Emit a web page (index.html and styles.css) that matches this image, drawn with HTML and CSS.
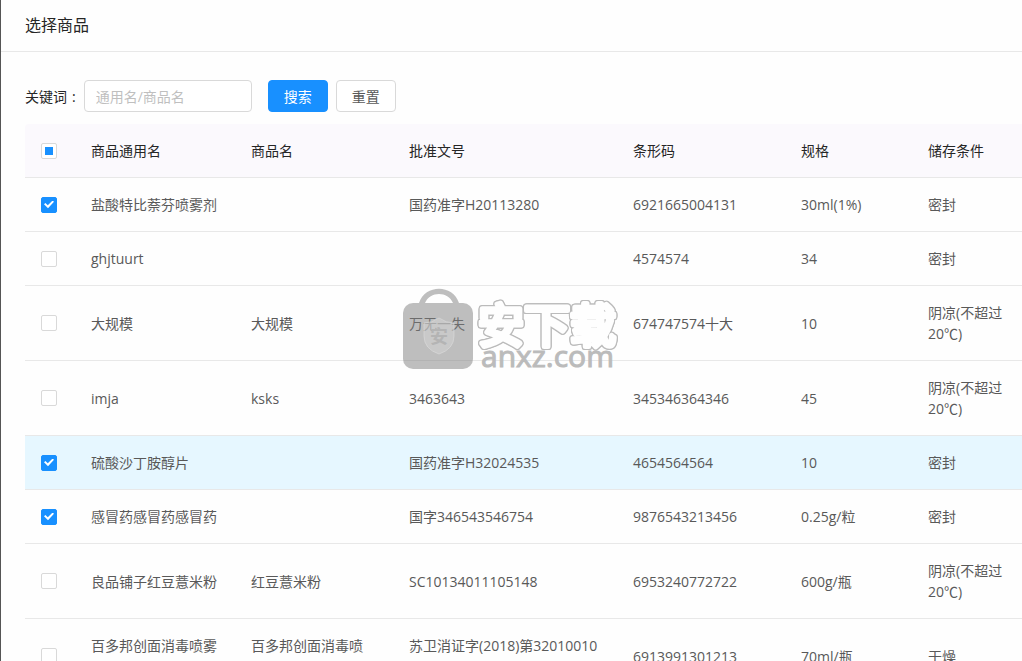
FILE: index.html
```html
<!DOCTYPE html>
<html lang="zh-CN">
<head>
<meta charset="utf-8">
<title>选择商品</title>
<link rel="stylesheet" href="styles.css">
</head>
<body>
<main class="dialog">
  <header class="dialog-header"><h1 class="dialog-title">选择商品</h1></header>
  <section class="dialog-body">
    <form class="search">
      <label class="search-label" for="keyword">关键词<span class="colon">:</span></label>
      <input class="search-input" id="keyword" type="text" placeholder="通用名/商品名">
      <button class="btn btn-primary" type="button">搜索</button>
      <button class="btn" type="reset">重置</button>
    </form>
    <table class="goods">
      <colgroup>
        <col class="col-check"><col class="col-generic"><col class="col-name"><col class="col-approval"><col class="col-barcode"><col class="col-spec"><col>
      </colgroup>
      <thead>
        <tr>
          <th class="check-cell"><input class="check" id="check-all" type="checkbox" aria-label="全选"></th>
          <th>商品通用名</th><th>商品名</th><th>批准文号</th><th>条形码</th><th>规格</th><th>储存条件</th>
        </tr>
      </thead>
      <tbody>
        <tr>
          <td class="check-cell"><input class="check" type="checkbox" aria-label="选择" checked></td>
          <td>盐酸特比萘芬喷雾剂</td><td></td><td>国药准字H20113280</td><td>6921665004131</td><td>30ml(1%)</td><td>密封</td>
        </tr>
        <tr>
          <td class="check-cell"><input class="check" type="checkbox" aria-label="选择"></td>
          <td>ghjtuurt</td><td></td><td></td><td>4574574</td><td>34</td><td>密封</td>
        </tr>
        <tr>
          <td class="check-cell"><input class="check" type="checkbox" aria-label="选择"></td>
          <td>大规模</td><td>大规模</td><td>万无一失</td><td>674747574十大</td><td>10</td><td>阴凉(不超过20℃)</td>
        </tr>
        <tr>
          <td class="check-cell"><input class="check" type="checkbox" aria-label="选择"></td>
          <td>imja</td><td>ksks</td><td>3463643</td><td>345346364346</td><td>45</td><td>阴凉(不超过20℃)</td>
        </tr>
        <tr class="active">
          <td class="check-cell"><input class="check" type="checkbox" aria-label="选择" checked></td>
          <td>硫酸沙丁胺醇片</td><td></td><td>国药准字H32024535</td><td>4654564564</td><td>10</td><td>密封</td>
        </tr>
        <tr>
          <td class="check-cell"><input class="check" type="checkbox" aria-label="选择" checked></td>
          <td>感冒药感冒药感冒药</td><td></td><td>国字346543546754</td><td>9876543213456</td><td>0.25g/粒</td><td>密封</td>
        </tr>
        <tr>
          <td class="check-cell"><input class="check" type="checkbox" aria-label="选择"></td>
          <td>良品铺子红豆薏米粉</td><td>红豆薏米粉</td><td>SC10134011105148</td><td>6953240772722</td><td>600g/瓶</td><td>阴凉(不超过20℃)</td>
        </tr>
        <tr class="tall">
          <td class="check-cell"><input class="check" type="checkbox" aria-label="选择"></td>
          <td class="top">百多邦创面消毒喷雾</td><td class="top">百多邦创面消毒喷</td><td class="top">苏卫消证字(2018)第32010010</td><td>6913991301213</td><td>70ml/瓶</td><td>干燥</td>
        </tr>
      </tbody>
    </table>
  </section>
  <svg class="watermark" viewBox="0 0 220 86" width="220" height="86" aria-hidden="true">
    <g class="mark-bag">
      <path d="M17 15 C23 -4 51 -4 57 15 L51 15 C46 3 28 3 23 15 Z"/>
      <rect x="1" y="15" width="70" height="66" rx="10"/>
    </g>
    <path class="mark-shield" d="M37 30 Q44 35 52 35 V48 Q52 61 37 66 Q22 61 22 48 V35 Q30 35 37 30 Z"/>
    <text class="mark-seal" x="37" y="55" text-anchor="middle">安</text>
    <text class="mark-name" x="76" y="54">安下载</text>
    <text class="mark-site" x="79" y="79">anxz.com</text>
  </svg>
</main>
<script src="script.js"></script>
</body>
</html>
```
FILE: styles.css
```css
* { box-sizing: border-box; }

body {
  margin: 0;
  background: #fefefe;
  color: #595959;
  font: 14px/21px "Open Sans", "Noto Sans CJK SC", sans-serif;
}

.dialog {
  position: relative;
  height: 100vh;
  overflow: hidden;
  border-left: 1px solid #555;
}

.dialog-header {
  padding: 14px 24px 15px;
  border-bottom: 1px solid #e8e8e8;
}

.dialog-title {
  margin: 0;
  color: #262626;
  font-size: 16px;
  font-weight: 400;
  line-height: 22px;
}

.dialog-body { padding: 28px 0 0 24px; }

.search {
  display: flex;
  align-items: center;
  gap: 8px;
  margin-bottom: 12px;
}

.search-label { color: #262626; }
.colon { margin: 0 0 0 5px; }

.search-input {
  width: 168px;
  height: 32px;
  margin-right: 8px;
  padding: 4px 11px;
  border: 1px solid #d9d9d9;
  border-radius: 4px;
  background: #fff;
  color: #595959;
  font: inherit;
}

.search-input::placeholder { color: #bfbfbf; }

.btn {
  width: 60px;
  height: 32px;
  padding: 0;
  border: 1px solid #d9d9d9;
  border-radius: 4px;
  background: #fff;
  color: #595959;
  font: inherit;
}

.btn-primary {
  border-color: #1890ff;
  background: #1890ff;
  color: #fff;
}

.goods {
  width: 100%;
  table-layout: fixed;
  border-collapse: separate;
  border-spacing: 0;
}

.col-check { width: 50px; }
.col-generic { width: 160px; }
.col-name { width: 158px; }
.col-approval { width: 224px; }
.col-barcode { width: 168px; }
.col-spec { width: 127px; }

.goods th,
.goods td {
  padding: 16px;
  border-bottom: 1px solid #e8e8e8;
  text-align: left;
  font-weight: 400;
  vertical-align: middle;
}

.goods th {
  background: #fbf9fd;
  color: #262626;
}

.goods th:first-child { border-top-left-radius: 4px; }
.goods .active td { background: #e6f7ff; }
.goods .tall { height: 75px; }
.goods .top { vertical-align: top; }
.goods .check-cell { padding: 16px 0 16px 16px; }

.check {
  appearance: none;
  display: grid;
  place-content: center;
  width: 16px;
  height: 16px;
  margin: 0;
  border: 1px solid #d9d9d9;
  border-radius: 2px;
  background: #fff;
}

.check:checked {
  border-color: #1890ff;
  background: #1890ff;
}

.check:checked::after {
  content: "";
  width: 10px;
  height: 8px;
  background: #fff;
  clip-path: polygon(0 48%, 14% 30%, 38% 60%, 86% 0, 100% 16%, 40% 96%);
}

.check:indeterminate::after {
  content: "";
  width: 8px;
  height: 8px;
  background: #1890ff;
}

.watermark {
  position: absolute;
  top: 288px;
  left: 401px;
  pointer-events: none;
}

.mark-bag { fill: #808080; opacity: 0.5; }
.mark-shield { fill: #d0d0d0; fill-opacity: 0.6; stroke: #d8d8d8; stroke-opacity: 0.7; }
.mark-seal { fill: #b4b4b4; font-size: 18px; font-weight: 700; }

.mark-name {
  fill: #fefefe;
  stroke: #fefefe;
  stroke-width: 5px;
  stroke-linejoin: round;
  font-size: 46px;
  font-weight: 400;
  filter: drop-shadow(1px 0 0 #bbb) drop-shadow(-1px 0 0 #bbb) drop-shadow(0 1px 0 #bbb) drop-shadow(0 -1px 0 #bbb);
}

.mark-site {
  fill: #bbb;
  stroke: #bbb;
  stroke-width: 1px;
  font-size: 30px;
}
```
FILE: script.js
```js
document.getElementById("check-all").indeterminate = true;
```
